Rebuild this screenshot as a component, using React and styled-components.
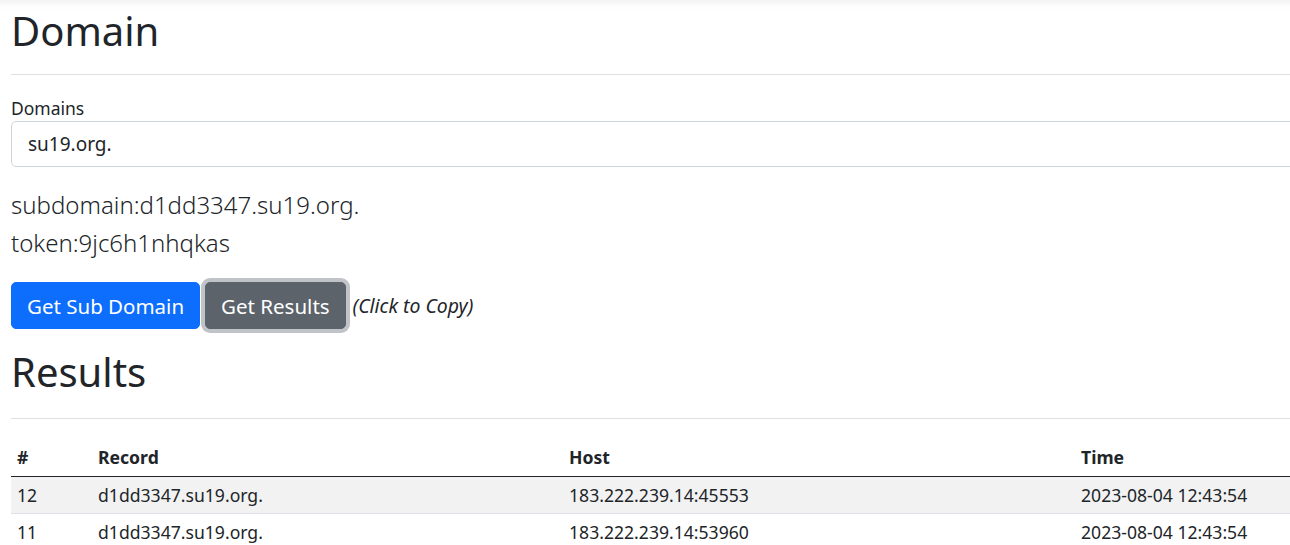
import styled, { createGlobalStyle } from "styled-components";

const Global = createGlobalStyle`
  html, body { margin: 0; padding: 0; background: #fff; }
  body {
    font-family: "Segoe UI", "Noto Sans", "Liberation Sans", sans-serif;
    color: #212529;
    overflow: hidden;
  }
`;

const Page = styled.div`
  width: 1400px;
  padding: 0 0 0 11px;
  min-height: 545px;
  box-shadow: inset 0 10px 10px -8px rgba(0, 0, 0, 0.08);
`;

const Heading = styled.h1`
  margin: 0;
  padding-top: ${(p) => p.$top}px;
  font-size: 40px;
  font-weight: 400;
  line-height: 1.2;
`;

const Rule = styled.hr`
  margin: ${(p) => p.$above}px 0 ${(p) => p.$below}px;
  border: 0;
  border-top: 1px solid #dfdfdf;
`;

const Label = styled.label`
  display: block;
  font-size: 17.5px;
  line-height: 24px;
  margin-bottom: 1px;
`;

const Input = styled.input`
  display: block;
  box-sizing: border-box;
  width: 100%;
  height: 46px;
  padding: 0 16px;
  font: inherit;
  font-size: 19px;
  color: #212529;
  border: 1px solid #ced4da;
  border-radius: 5px;
  outline: 0;
`;

const Info = styled.div`
  margin-top: 19px;
  font-size: 24px;
  font-weight: 300;
  line-height: 38px;
`;

const Actions = styled.div`
  display: flex;
  align-items: center;
  gap: 5px;
  margin-top: 20px;
`;

const Button = styled.button`
  height: 47px;
  padding: 0 15px;
  font: inherit;
  font-size: 20.5px;
  color: #fff;
  border: 1px solid ${(p) => (p.$variant === "primary" ? "#0d6efd" : "#5c636a")};
  background: ${(p) => (p.$variant === "primary" ? "#0d6efd" : "#5c636a")};
  border-radius: 5px;
  box-shadow: ${(p) => (p.$focus ? "0 0 0 4px rgba(130, 138, 145, 0.5)" : "none")};
  cursor: pointer;
`;

const Hint = styled.em`
  margin-left: 2px;
  font-size: 19.4px;
`;

const Table = styled.table`
  width: 1400px;
  border-collapse: collapse;
  font-size: 17.6px;
  th, td {
    text-align: left;
    padding: 0 6px;
    height: 36px;
  }
  th { font-weight: 700; border-bottom: 1px solid #212529; height: 38px; }
  td { border-bottom: 1px solid #dee2e6; }
  tbody tr:nth-child(odd) td { background: #f2f2f2; }
`;

const rows = [
  { id: 12, record: "d1dd3347.su19.org.", host: "183.222.239.14:45553", time: "2023-08-04 12:43:54" },
  { id: 11, record: "d1dd3347.su19.org.", host: "183.222.239.14:53960", time: "2023-08-04 12:43:54" },
];

export default function App() {
  return (
    <>
      <Global />
      <Page>
        <Heading $top={7}>Domain</Heading>
        <Rule $above={19} $below={21} />
        <Label>Domains</Label>
        <Input defaultValue="su19.org." />
        <Info>
          <div>subdomain:d1dd3347.su19.org.</div>
          <div>token:9jc6h1nhqkas</div>
        </Info>
        <Actions>
          <Button $variant="primary">Get Sub Domain</Button>
          <Button $variant="secondary" $focus>Get Results</Button>
          <Hint>(Click to Copy)</Hint>
        </Actions>
        <Heading $top={19}>Results</Heading>
        <Rule $above={22} $below={19} />
        <Table>
          <colgroup>
            <col style={{ width: 81 }} />
            <col style={{ width: 471 }} />
            <col style={{ width: 512 }} />
            <col />
          </colgroup>
          <thead>
            <tr>
              <th>#</th>
              <th>Record</th>
              <th>Host</th>
              <th>Time</th>
            </tr>
          </thead>
          <tbody>
            {rows.map((r) => (
              <tr key={r.id}>
                <td>{r.id}</td>
                <td>{r.record}</td>
                <td>{r.host}</td>
                <td>{r.time}</td>
              </tr>
            ))}
          </tbody>
        </Table>
      </Page>
    </>
  );
}
